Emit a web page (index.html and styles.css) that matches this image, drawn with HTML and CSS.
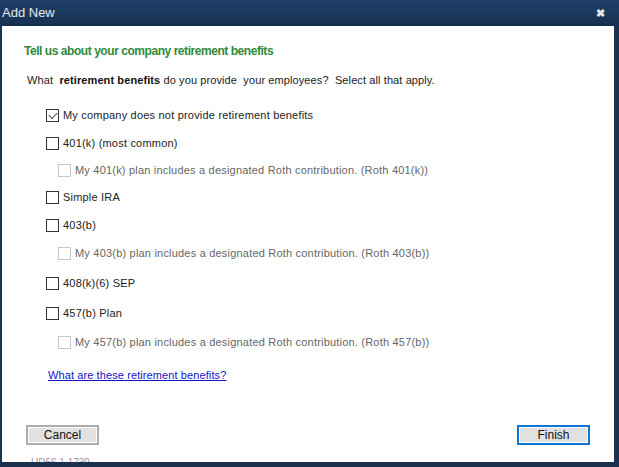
FILE: index.html
```html
<!DOCTYPE html>
<html lang="en">
<head>
  <meta charset="UTF-8">
  <title>Add New</title>
  <link rel="stylesheet" href="styles.css">
</head>
<body>
  <div class="window">
    <div class="titlebar">
      <span class="title">Add New</span>
      <span class="close">&#10006;</span>
    </div>
    <div class="panel">
      <h1>Tell us about your company retirement benefits</h1>
      <p class="intro">What&nbsp; <strong>retirement benefits</strong> do you provide&nbsp; your employees?&nbsp; Select all that apply.</p>

      <div class="options">
        <label class="row"><span class="box checked"></span>My company does not provide retirement benefits</label>
        <label class="row"><span class="box"></span>401(k) (most common)</label>
        <label class="row sub up"><span class="box"></span>My 401(k) plan includes a designated Roth contribution. (Roth 401(k))</label>
        <label class="row up"><span class="box"></span>Simple IRA</label>
        <label class="row"><span class="box"></span>403(b)</label>
        <label class="row sub"><span class="box"></span>My 403(b) plan includes a designated Roth contribution. (Roth 403(b))</label>
        <label class="row down2"><span class="box"></span>408(k)(6) SEP</label>
        <label class="row down2"><span class="box"></span>457(b) Plan</label>
        <label class="row sub down1"><span class="box"></span>My 457(b) plan includes a designated Roth contribution. (Roth 457(b))</label>
      </div>

      <a class="help" href="#">What are these retirement benefits?</a>

      <div class="actions">
        <button class="btn">Cancel</button>
        <button class="btn primary">Finish</button>
      </div>
      <div class="version">UD56 1.1739</div>
    </div>
  </div>
</body>
</html>
```

FILE: styles.css
```css
body {
  margin: 0;
  background-color: #1c3352;
  font-family: "Liberation Sans", Arial, sans-serif;
  font-size: 11px;
  color: #222;
}

.window {
  width: 619px;
  height: 467px;
  background-color: #1b3150;
  overflow: hidden;
}

.titlebar {
  height: 26px;
  display: flex;
  align-items: center;
  justify-content: space-between;
  padding: 0 14px 0 2px;
  background: linear-gradient(#20406a, #18304f);
  color: #e4e9f0;
}

.title {
  font-size: 13px;
  margin-top: -1px;
}

.close {
  font-size: 11px;
  font-weight: bold;
  color: #e8e8e8;
}

.panel {
  margin-left: 2px;
  width: 612px;
  height: 436px;
  background-color: #fff;
  padding: 18px 0 0 24px;
  box-sizing: border-box;
  overflow: hidden;
}

h1 {
  margin: 0 0 0 -2px;
  font-size: 12px;
  font-weight: bold;
  letter-spacing: -0.45px;
  color: #2f8a39;
  line-height: 15px;
}

.intro {
  margin: 14px 0 0 1px;
  line-height: 14px;
  letter-spacing: 0.1px;
}

.intro strong {
  color: #111;
}

.options {
  margin: 14px 0 0 20px;
}

.row {
  display: flex;
  align-items: center;
  height: 28px;
  letter-spacing: 0.2px;
}

.row.up {
  margin-top: -1px;
}

.row.down1 {
  margin-top: 1px;
}

.row.down2 {
  margin-top: 2px;
}

.box {
  width: 11px;
  height: 11px;
  border: 1px solid #333;
  margin-right: 4px;
  position: relative;
  flex: none;
}

.box.checked::after {
  content: "";
  position: absolute;
  left: 2px;
  top: 0;
  width: 7px;
  height: 4px;
  border-left: 1.5px solid #444;
  border-bottom: 1.5px solid #444;
  transform: translate(0, 2px) rotate(-45deg);
}

.row.sub {
  margin-left: 12px;
  color: #666;
}

.row.sub .box {
  border-color: #c8c8c8;
}

.help {
  display: inline-block;
  margin: 13px 0 0 22px;
  color: #1414c8;
  text-decoration: underline;
  letter-spacing: 0.1px;
}

.actions {
  display: flex;
  justify-content: space-between;
  width: 564px;
  margin: 44px 0 0 0;
}

.btn {
  width: 73px;
  height: 20px;
  padding: 0;
  border: 2px solid #adadad;
  background-color: #e1e1e1;
  box-shadow: inset 0 0 0 1px #fff;
  font-family: "Liberation Sans", Arial, sans-serif;
  font-size: 12px;
  color: #111;
}

.btn.primary {
  border-color: #0a78d4;
}

.version {
  margin: 12px 0 0 5px;
  font-size: 10px;
  color: #999;
}
```
